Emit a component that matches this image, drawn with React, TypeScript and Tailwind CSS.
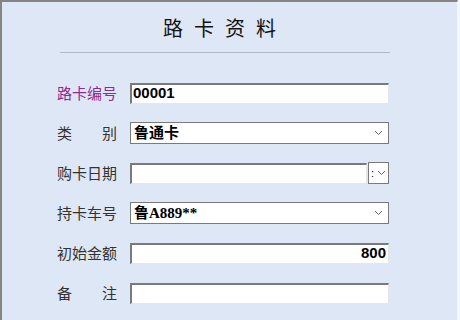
import React from "react";

const cjk = { fontFamily: '"Noto Sans CJK SC", "Liberation Sans", sans-serif' };

function Chevron() {
  return (
    <svg width="9" height="6" viewBox="0 0 9 6" className="shrink-0">
      <path d="M1 1 L4.5 4.5 L8 1" fill="none" stroke="#666666" strokeWidth="1" />
    </svg>
  );
}

function Label({ children, color = "#333333", spread = false }: { children: string; color?: string; spread?: boolean }) {
  const chars = children.split("");
  return (
    <div
      className={`w-[60px] shrink-0 text-[15px] leading-[20px] ${spread ? "flex justify-between" : ""}`}
      style={{ ...cjk, color }}
    >
      {spread ? chars.map((c, i) => <span key={i}>{c}</span>) : children}
    </div>
  );
}

function TextBox({ value = "", right = false, width = "w-[259px]" }: { value?: string; right?: boolean; width?: string }) {
  return (
    <div
      className={`${width} h-[21px] bg-white border-t-2 border-l-2 border-b border-r border-t-[#7a7a7a] border-l-[#7a7a7a] border-b-[#e6e6e6] border-r-[#e6e6e6] flex items-center px-[1px] text-[15px] font-semibold text-black ${right ? "justify-end pr-[2px]" : ""}`}
      style={{ fontFamily: '"Liberation Sans", "Noto Sans CJK SC", sans-serif' }}
    >
      {value}
    </div>
  );
}

function SelectBox({ value }: { value: string }) {
  return (
    <div className="w-[259px] h-[22px] bg-white border border-[#7a7a7a] flex items-center justify-between pl-[3px] pr-[5px]">
      <span className="text-[15px] font-bold text-black leading-[20px]" style={{ fontFamily: '"Liberation Serif", "Noto Sans CJK SC", serif' }}>
        {value}
      </span>
      <Chevron />
    </div>
  );
}

export default function App() {
  return (
    <div className="w-[460px] h-[320px] bg-[#f3f6fb]">
      <div className="w-[458px] h-[320px] bg-[#dee7f5] border-t-2 border-l-2 border-r border-t-[#858585] border-l-[#858585] border-r-[#f8f8f8] flex flex-col">
        <div className="pt-[12px] pl-[161px] h-[40px] text-[20px] leading-[28px] tracking-[11px] text-[#111]" style={cjk}>
          路卡资料
        </div>
        <div className="mt-[10px] ml-[58px] w-[330px] h-[1px] bg-[#b4bac4]" />
        <div className="mt-[20px] flex flex-col pl-[55px]">
          <div className="h-[40px] flex items-center gap-[13px]">
            <Label color="#8e2a91">路卡编号</Label>
            <TextBox value="00001" />
          </div>
          <div className="h-[40px] flex items-center gap-[13px]">
            <Label spread>类别</Label>
            <SelectBox value="鲁通卡" />
          </div>
          <div className="h-[40px] flex items-center gap-[13px]">
            <Label>购卡日期</Label>
            <div className="flex items-center">
              <TextBox width="w-[237px]" />
              <div className="ml-[1px] w-[21px] h-[22px] bg-white border border-[#7a7a7a] flex items-center pl-[2px] gap-[3px]">
                <span className="text-[11px] leading-none text-black" style={{ fontFamily: '"Liberation Sans", sans-serif' }}>:</span>
                <Chevron />
              </div>
            </div>
          </div>
          <div className="h-[40px] flex items-center gap-[13px]">
            <Label>持卡车号</Label>
            <SelectBox value="鲁A889**" />
          </div>
          <div className="h-[40px] flex items-center gap-[13px]">
            <Label>初始金额</Label>
            <TextBox value="800" right />
          </div>
          <div className="h-[40px] flex items-center gap-[13px]">
            <Label spread>备注</Label>
            <TextBox />
          </div>
        </div>
      </div>
    </div>
  );
}
